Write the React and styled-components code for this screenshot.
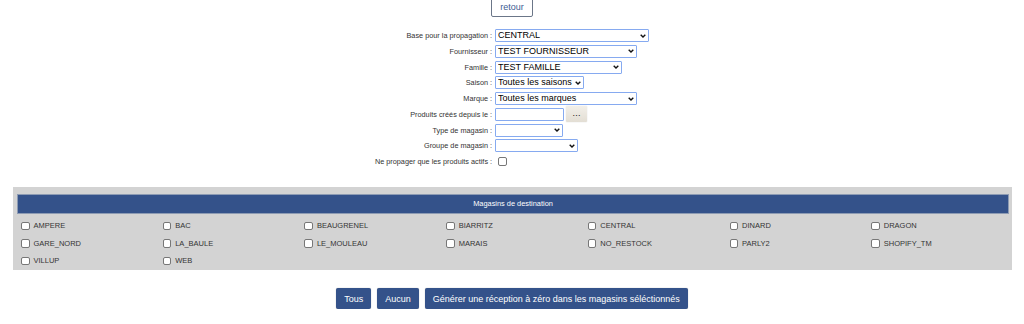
import React from 'react';
import styled, { createGlobalStyle } from 'styled-components';

const GlobalStyle = createGlobalStyle`
  body {
    margin: 0;
    background: #ffffff;
    font-family: "Liberation Sans", Arial, sans-serif;
    color: #333333;
  }
`;

const Page = styled.div`
  display: flex;
  flex-direction: column;
  align-items: center;
  width: 1024px;
`;

const RetourButton = styled.button`
  margin-top: -4px;
  height: 21px;
  padding: 0 8px;
  background: #ffffff;
  border: 1px solid #6b7688;
  border-radius: 2px;
  color: #3d5b92;
  font-family: "Liberation Sans", Arial, sans-serif;
  font-size: 9px;
`;

const Form = styled.div`
  display: grid;
  grid-template-columns: auto auto;
  grid-auto-rows: 13px;
  column-gap: 3px;
  row-gap: 2.75px;
  margin-top: 12px;
  justify-content: center;
`;

const Label = styled.div`
  display: flex;
  align-items: center;
  justify-content: flex-end;
  font-size: 7.3px;
  color: #333333;
  white-space: nowrap;
`;

const Field = styled.div`
  display: flex;
  align-items: center;
  height: 13px;
`;

const SelectWrap = styled.div`
  position: relative;
  width: ${p => p.$w}px;
  height: 13px;
`;

const Select = styled.select`
  appearance: none;
  -webkit-appearance: none;
  display: block;
  box-sizing: border-box;
  width: 100%;
  height: 13px;
  margin: 0;
  padding: 0 9px 0 2px;
  border: 1px solid #86aaf0;
  border-radius: 1px;
  background: #ffffff;
  color: #000000;
  font-family: "Liberation Sans", Arial, sans-serif;
  font-size: 9px;
  line-height: 11px;
  outline: none;
`;

const Chevron = styled.svg`
  position: absolute;
  right: 3.5px;
  top: 4.5px;
  width: 6px;
  height: 4px;
  pointer-events: none;
`;

const TextInput = styled.input`
  display: block;
  box-sizing: border-box;
  width: 69px;
  height: 13px;
  margin: 0;
  padding: 0 2px;
  border: 1px solid #86aaf0;
  border-radius: 1px;
  background: #ffffff;
  outline: none;
`;

const DotsButton = styled.button`
  flex: none;
  width: 21px;
  height: 16px;
  margin-left: 2px;
  padding: 0 0 2px;
  border: none;
  border-radius: 1px;
  background: linear-gradient(#f2efe9, #e3ded4);
  box-shadow: 0 0 1px rgba(0, 0, 0, 0.3);
  color: #111111;
  font-family: "Liberation Sans", Arial, sans-serif;
  font-size: 9px;
  letter-spacing: 0.3px;
  line-height: 12px;
`;

const Check = styled.input.attrs({ type: 'checkbox' })`
  appearance: none;
  -webkit-appearance: none;
  box-sizing: border-box;
  flex: none;
  width: 8.5px;
  height: 8.5px;
  margin: 0 ${p => p.$gap || 0}px 0 ${p => p.$left || 0}px;
  border: 1px solid #777777;
  border-radius: 2px;
  background: #ffffff;
`;

const Panel = styled.div`
  box-sizing: border-box;
  align-self: stretch;
  margin: 18.5px 12px 0 13px;
  padding: 7px 3px 0 4px;
  background: #d3d3d3;
`;

const PanelHeader = styled.div`
  display: flex;
  align-items: center;
  justify-content: center;
  box-sizing: border-box;
  height: 20px;
  background: #34528a;
  border: 1px solid #8d9bb3;
  color: #ffffff;
  font-size: 7.4px;
`;

const ShopGrid = styled.div`
  display: grid;
  grid-template-columns: repeat(7, 1fr);
  grid-auto-rows: 17.5px;
  margin-top: 3.5px;
`;

const Shop = styled.label`
  display: flex;
  align-items: center;
  padding-left: 4px;
  font-size: 7.5px;
  color: #333333;
`;

const Actions = styled.div`
  display: flex;
  gap: 6px;
  margin-top: 18.5px;
`;

const ActionButton = styled.button`
  height: 21px;
  padding: 0 8px;
  border: none;
  border-radius: 2px;
  background: #34528a;
  box-shadow: 0 0 1px rgba(0, 0, 0, 0.4);
  color: #ffffff;
  font-family: "Liberation Sans", Arial, sans-serif;
  font-size: 9px;
`;

const shops = [
  'AMPERE', 'BAC', 'BEAUGRENEL', 'BIARRITZ', 'CENTRAL', 'DINARD', 'DRAGON',
  'GARE_NORD', 'LA_BAULE', 'LE_MOULEAU', 'MARAIS', 'NO_RESTOCK', 'PARLY2', 'SHOPIFY_TM',
  'VILLUP', 'WEB',
];

const Dropdown = ({ w, value }) => (
  <SelectWrap $w={w}>
    <Select defaultValue={value}>
      <option>{value}</option>
    </Select>
    <Chevron viewBox="0 0 6 4">
      <path d="M0.7 0.7 L3 3 L5.3 0.7" fill="none" stroke="#111" strokeWidth="1.4" />
    </Chevron>
  </SelectWrap>
);

export default function App() {
  return (
    <>
      <GlobalStyle />
      <Page>
        <RetourButton>retour</RetourButton>

        <Form>
          <Label>Base pour la propagation :</Label>
          <Field><Dropdown w={154} value="CENTRAL" /></Field>

          <Label>Fournisseur :</Label>
          <Field><Dropdown w={142} value="TEST FOURNISSEUR" /></Field>

          <Label>Famille :</Label>
          <Field><Dropdown w={127} value="TEST FAMILLE" /></Field>

          <Label>Saison :</Label>
          <Field><Dropdown w={89} value="Toutes les saisons" /></Field>

          <Label>Marque :</Label>
          <Field><Dropdown w={142} value="Toutes les marques" /></Field>

          <Label>Produits créés depuis le :</Label>
          <Field>
            <TextInput />
            <DotsButton>...</DotsButton>
          </Field>

          <Label>Type de magasin :</Label>
          <Field><Dropdown w={68} value="" /></Field>

          <Label>Groupe de magasin :</Label>
          <Field><Dropdown w={83} value="" /></Field>

          <Label>Ne propager que les produits actifs :</Label>
          <Field><Check $left={3} /></Field>
        </Form>

        <Panel>
          <PanelHeader>Magasins de destination</PanelHeader>
          <ShopGrid>
            {shops.map(s => (
              <Shop key={s}>
                <Check $gap={4} />
                {s}
              </Shop>
            ))}
          </ShopGrid>
        </Panel>

        <Actions>
          <ActionButton>Tous</ActionButton>
          <ActionButton>Aucun</ActionButton>
          <ActionButton>Générer une réception à zéro dans les magasins séléctionnés</ActionButton>
        </Actions>
      </Page>
    </>
  );
}
